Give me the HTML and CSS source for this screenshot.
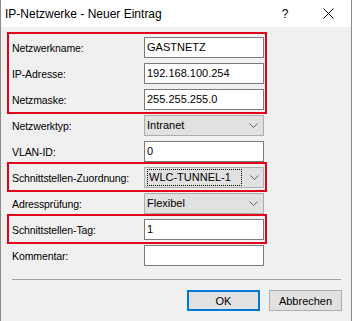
FILE: index.html
```
<!DOCTYPE html>
<html lang="de">
<head>
<meta charset="utf-8">
<title>IP-Netzwerke - Neuer Eintrag</title>
<link rel="stylesheet" href="styles.css">
</head>
<body>
<div class="win">
  <div class="titlebar">
    <span class="title">IP-Netzwerke - Neuer Eintrag</span>
    <span class="help">?</span>
    <span class="close"><svg width="11" height="11" viewBox="0 0 11 11"><path d="M0.5 0.5L10.5 10.5M10.5 0.5L0.5 10.5" stroke="#000" stroke-width="1" fill="none"/></svg></span>
  </div>
  <div class="content">
    <div class="form">
      <div class="group hl">
        <div class="row"><span class="lbl">Netzwerkname:</span><div class="input">GASTNETZ</div></div>
        <div class="row"><span class="lbl">IP-Adresse:</span><div class="input">192.168.100.254</div></div>
        <div class="row"><span class="lbl">Netzmaske:</span><div class="input">255.255.255.0</div></div>
      </div>
      <div class="row"><span class="lbl">Netzwerktyp:</span><div class="select"><span class="val">Intranet</span><span class="chev"><svg width="9" height="5" viewBox="0 0 9 5"><path d="M0.5 0.5L4.5 4.5L8.5 0.5" stroke="#606060" fill="none"/></svg></span></div></div>
      <div class="row"><span class="lbl">VLAN-ID:</span><div class="input">0</div></div>
      <div class="group hl">
        <div class="row"><span class="lbl">Schnittstellen-Zuordnung:</span><div class="select"><span class="val focus">WLC-TUNNEL-1</span><span class="chev"><svg width="9" height="5" viewBox="0 0 9 5"><path d="M0.5 0.5L4.5 4.5L8.5 0.5" stroke="#606060" fill="none"/></svg></span></div></div>
      </div>
      <div class="row"><span class="lbl">Adressprüfung:</span><div class="select"><span class="val">Flexibel</span><span class="chev"><svg width="9" height="5" viewBox="0 0 9 5"><path d="M0.5 0.5L4.5 4.5L8.5 0.5" stroke="#606060" fill="none"/></svg></span></div></div>
      <div class="group hl">
        <div class="row"><span class="lbl">Schnittstellen-Tag:</span><div class="input">1</div></div>
      </div>
      <div class="row"><span class="lbl">Kommentar:</span><div class="input"></div></div>
    </div>
    <div class="sep"></div>
    <div class="buttons">
      <div class="btn default">OK</div>
      <div class="btn">Abbrechen</div>
    </div>
  </div>
</div>
</body>
</html>
```
FILE: styles.css
```
html, body {
  margin: 0;
  padding: 0;
  background: #f0f0f0;
}
body {
  font-family: "Liberation Sans", Arial, sans-serif;
  font-size: 11px;
  color: #000;
}
.win {
  width: 352px;
  height: 321px;
  box-sizing: border-box;
  border-left: 1px solid #8a8a8a;
  border-right: 1px solid #8a8a8a;
  background: #f0f0f0;
}
.titlebar {
  height: 27px;
  background: #fff;
  display: flex;
  align-items: center;
}
.title {
  font-size: 12px;
  padding-left: 4px;
  flex: 1;
}
.help {
  font-size: 12px;
  width: 20px;
  text-align: center;
  margin-right: 28px;
}
.close {
  width: 11px;
  margin-right: 17px;
  display: flex;
}
.content {
  padding: 10px 0 0 11px;
}
.form {
  display: flex;
  flex-direction: column;
  gap: 5px;
}
.group {
  display: flex;
  flex-direction: column;
  gap: 5px;
  position: relative;
  width: 252px;
}
.group.hl::after {
  content: "";
  position: absolute;
  top: -5px;
  left: -5px;
  right: -3px;
  bottom: -4px;
  border: 2px solid #e2001a;
}
.row {
  display: grid;
  grid-template-columns: 132px 120px;
  height: 21px;
  align-items: center;
}
.lbl {
  white-space: nowrap;
  font-size: 10.5px;
  letter-spacing: -0.1px;
}
.input {
  height: 21px;
  box-sizing: border-box;
  border: 1px solid #7a7a7a;
  background: #fff;
  padding-left: 2px;
  line-height: 19px;
}
.select {
  height: 21px;
  box-sizing: border-box;
  border: 1px solid #adadad;
  background: #e1e1e1;
  display: flex;
  align-items: center;
  padding-left: 2px;
}
.val {
  flex: 1;
  line-height: 15px;
}
.val.focus {
  flex: 0 0 auto;
  width: 95px;
  border: 1px dotted #000;
  box-sizing: border-box;
  padding-left: 1px;
  margin-right: 3px;
}
.chev {
  width: 20px;
  display: flex;
  justify-content: center;
  margin-left: auto;
}
.sep {
  width: 329px;
  height: 1px;
  background: #a0a0a0;
  margin-top: 13px;
}
.buttons {
  display: flex;
  justify-content: flex-end;
  gap: 9px;
  width: 330px;
  margin-top: 10px;
}
.btn {
  width: 73px;
  height: 21px;
  box-sizing: border-box;
  border: 1px solid #adadad;
  background: #e1e1e1;
  display: flex;
  align-items: center;
  justify-content: center;
}
.btn.default {
  border: 2px solid #0078d7;
}
```
